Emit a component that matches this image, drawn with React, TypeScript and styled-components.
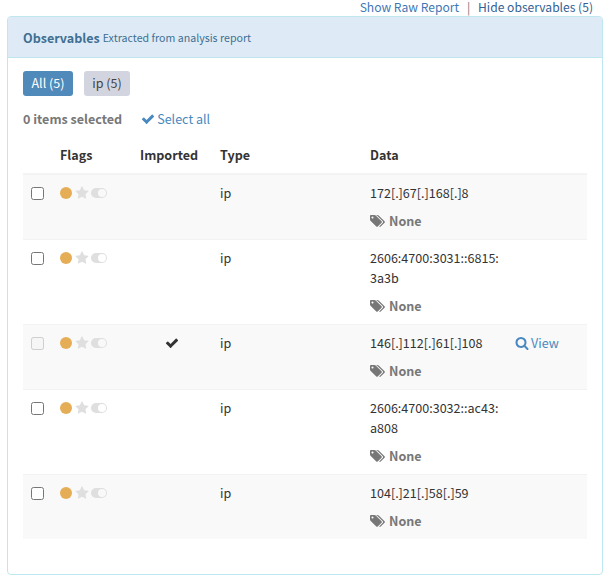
import React from 'react';
import styled, { createGlobalStyle, css } from 'styled-components';

const GlobalStyle = createGlobalStyle`
  * { box-sizing: border-box; }
  body {
    margin: 0;
    background: #fff;
    color: #333;
    font-family: "Noto Sans CJK SC", "Noto Sans", sans-serif;
    font-size: 12.55px;
    line-height: 20px;
  }
`;

const Page = styled.main`
  padding: 0 6px 0 7px;
  height: 583px;
`;

const TopLinks = styled.nav`
  display: flex;
  justify-content: flex-end;
  height: 16px;
  padding-right: 10px;
  font-size: 12.1px;
  line-height: 14px;
  white-space: nowrap;
`;

const TopLink = styled.a<{ $active?: boolean }>`
  color: ${(p) => (p.$active ? '#335f92' : '#3f78b5')};
`;

const Divider = styled.span`
  width: 19px;
  text-align: center;
  color: #777;
`;

const Panel = styled.section`
  height: 559px;
  border: 1px solid #bfe7f0;
  border-radius: 4px;
  overflow: hidden;
`;

const PanelHeader = styled.header`
  display: flex;
  align-items: center;
  gap: 3px;
  height: 41px;
  padding: 1px 15px 0;
  background: #deebf6;
  border-bottom: 1px solid #bfe7f0;
  color: #3f6f92;
`;

const Title = styled.strong`
  font-weight: 700;
`;

const Subtitle = styled.small`
  font-size: 10.65px;
`;

const PanelBody = styled.div`
  padding: 13px 15px;
`;

const Filters = styled.div`
  display: flex;
  gap: 11px;
`;

const Filter = styled.button<{ $active?: boolean; $width: number }>`
  width: ${(p) => p.$width}px;
  height: 25px;
  padding: 0 0 2px;
  border: 0;
  border-radius: 3px;
  font: inherit;
  line-height: 23px;
  background: ${(p) => (p.$active ? '#508abb' : '#d2d5df')};
  color: ${(p) => (p.$active ? '#fff' : '#444')};
`;

const Selection = styled.div`
  display: flex;
  gap: 19px;
  margin-top: 13px;
`;

const Count = styled.strong`
  color: #777;
`;

const ActionLink = styled.a`
  display: inline-flex;
  align-items: center;
  gap: 2px;
  color: #4989c0;
`;

const columns = css`
  display: grid;
  grid-template-columns: 29px 80px 80px 150px 145px 1fr;
  padding-left: 8px;
`;

const Table = styled.div`
  margin-top: 8px;
`;

const HeadRow = styled.div`
  ${columns}
  height: 37px;
  padding-top: 8px;
  border-bottom: 1px solid #f4f4f4;
  font-weight: 700;
`;

const Row = styled.div<{ $shaded: boolean }>`
  ${columns}
  padding-top: 8px;
  padding-bottom: 8px;
  border-top: 1px solid #f3f3f3;
  background: ${(p) => (p.$shaded ? '#f9f9f9' : '#fff')};
`;

const Cell = styled.div`
  min-width: 0;
`;

const Checkbox = styled.input.attrs({ type: 'checkbox' })`
  display: block;
  width: 13px;
  height: 13px;
  margin: 4px 0 0;
`;

const Flags = styled.div`
  display: flex;
  align-items: center;
  gap: 2.5px;
  height: 20px;
  color: #dfdfdf;
`;

const Dot = styled.span`
  width: 12px;
  height: 12px;
  border-radius: 50%;
  background: #e5ad56;
`;

const Imported = styled.div`
  display: flex;
  align-items: center;
  height: 20px;
  padding-left: 25px;
`;

const Tags = styled.div`
  display: flex;
  align-items: center;
  gap: 4px;
  height: 20px;
  margin-top: 8px;
  color: #777;
  font-weight: 700;
`;

const Icon = styled.svg`
  display: block;
  flex: none;
  fill: currentColor;
`;

const CheckIcon = () => (
  <Icon width="14" height="14" viewBox="0 0 1792 1792">
    <path d="M1671 566q0 40-28 68l-724 724-136 136q-28 28-68 28t-68-28l-136-136-362-362q-28-28-28-68t28-68l136-136q28-28 68-28t68 28l294 295 656-657q28-28 68-28t68 28l136 136q28 28 28 68z" />
  </Icon>
);

const StarIcon = () => (
  <Icon width="14" height="14" viewBox="0 0 1792 1792">
    <path d="M1728 647q0 22-26 48l-363 354 86 500q1 7 1 20 0 21-10.5 35.5t-30.5 14.5q-19 0-40-12l-449-236-449 236q-22 12-40 12-21 0-31.5-14.5t-10.5-35.5q0-6 2-20l86-500-364-354q-25-27-25-48 0-37 56-46l502-73 225-455q19-41 49-41t49 41l225 455 502 73q56 9 56 46z" />
  </Icon>
);

const ToggleIcon = () => (
  <Icon width="16" height="10" viewBox="0 0 16 10">
    <path
      fillRule="evenodd"
      d="M5 0h6a5 5 0 0 1 0 10H5A5 5 0 0 1 5 0zM11 1a4 4 0 1 0 0 8 4 4 0 0 0 0-8z"
    />
  </Icon>
);

const SearchIcon = () => (
  <Icon width="14" height="14" viewBox="0 0 1792 1792">
    <path d="M1216 832q0-185-131.5-316.5t-316.5-131.5-316.5 131.5-131.5 316.5 131.5 316.5 316.5 131.5 316.5-131.5 131.5-316.5zm512 832q0 52-38 90t-90 38q-54 0-90-38l-343-342q-179 124-399 124-143 0-273.5-55.5t-225-150-150-225-55.5-273.5 55.5-273.5 150-225 225-150 273.5-55.5 273.5 55.5 225 150 150 225 55.5 273.5q0 220-124 399l343 343q37 37 37 90z" />
  </Icon>
);

const TagsIcon = () => (
  <Icon width="15" height="14" viewBox="0 0 1920 1792">
    <path d="M448 448q0-53-37.5-90.5t-90.5-37.5-90.5 37.5-37.5 90.5 37.5 90.5 90.5 37.5 90.5-37.5 37.5-90.5zm1067 576q0 53-37 90l-491 492q-39 37-91 37-53 0-90-37l-715-716q-38-37-64.5-101t-26.5-117v-416q0-52 38-90t90-38h416q53 0 117 26.5t102 64.5l715 714q37 39 37 91zm384 0q0 53-37 90l-491 492q-39 37-91 37-36 0-59-14t-53-45l470-470q37-37 37-90 0-52-37-91l-715-714q-38-38-102-64.5t-117-26.5h224q53 0 117 26.5t102 64.5l715 714q37 39 37 91z" />
  </Icon>
);

interface Observable {
  lines: string[];
  imported?: boolean;
}

const observables: Observable[] = [
  { lines: ['172[.]67[.]168[.]8'] },
  { lines: ['2606:4700:3031::6815:', '3a3b'] },
  { lines: ['146[.]112[.]61[.]108'], imported: true },
  { lines: ['2606:4700:3032::ac43:', 'a808'] },
  { lines: ['104[.]21[.]58[.]59'] },
];

export default function App() {
  return (
    <Page>
      <GlobalStyle />
      <TopLinks>
        <TopLink>Show Raw Report</TopLink>
        <Divider>|</Divider>
        <TopLink $active>Hide observables (5)</TopLink>
      </TopLinks>
      <Panel>
        <PanelHeader>
          <Title>Observables</Title>
          <Subtitle>Extracted from analysis report</Subtitle>
        </PanelHeader>
        <PanelBody>
          <Filters>
            <Filter $active $width={50}>All (5)</Filter>
            <Filter $width={46}>ip (5)</Filter>
          </Filters>
          <Selection>
            <Count>0 items selected</Count>
            <ActionLink>
              <CheckIcon />
              Select all
            </ActionLink>
          </Selection>
          <Table>
            <HeadRow>
              <Cell />
              <Cell>Flags</Cell>
              <Cell>Imported</Cell>
              <Cell>Type</Cell>
              <Cell>Data</Cell>
              <Cell />
            </HeadRow>
            {observables.map((item, i) => (
              <Row key={item.lines[0]} $shaded={i % 2 === 0}>
                <Cell>
                  <Checkbox disabled={item.imported} />
                </Cell>
                <Flags>
                  <Dot />
                  <StarIcon />
                  <ToggleIcon />
                </Flags>
                <Imported>{item.imported && <CheckIcon />}</Imported>
                <Cell>ip</Cell>
                <Cell>
                  {item.lines.map((line) => (
                    <div key={line}>{line}</div>
                  ))}
                  <Tags>
                    <TagsIcon />
                    None
                  </Tags>
                </Cell>
                <Cell>
                  {item.imported && (
                    <ActionLink>
                      <SearchIcon />
                      View
                    </ActionLink>
                  )}
                </Cell>
              </Row>
            ))}
          </Table>
        </PanelBody>
      </Panel>
    </Page>
  );
}
